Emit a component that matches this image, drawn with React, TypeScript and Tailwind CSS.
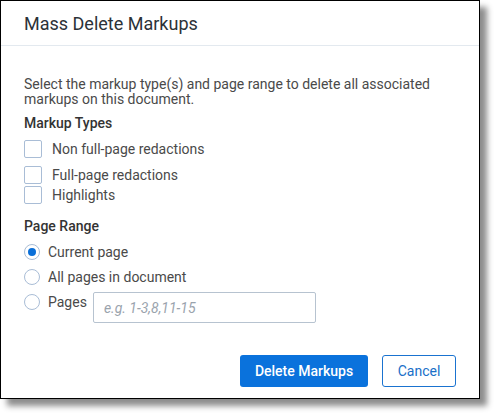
import React from "react";

function Checkbox({ label, className = "" }: { label: string; className?: string }) {
  return (
    <label className={`flex items-center gap-[10px] ${className}`}>
      <span className="block w-[18px] h-[18px] rounded-[2px] border border-[#a9bdd6] bg-white" />
      <span>{label}</span>
    </label>
  );
}

function Radio({ label, checked = false }: { label: string; checked?: boolean }) {
  return (
    <span className="flex items-center gap-[8px]">
      <span className="flex items-center justify-center w-[16px] h-[16px] rounded-full border border-[#a9bdd6] bg-white">
        {checked && <span className="block w-[8px] h-[8px] rounded-full bg-[#0a6fd8]" />}
      </span>
      <span>{label}</span>
    </span>
  );
}

export default function App() {
  return (
    <div className="w-[495px] h-[414px] bg-white" style={{ fontFamily: "Roboto, 'Liberation Sans', sans-serif" }}>
      <div className="w-[480px] h-[399px] border border-black bg-white shadow-[7px_7px_6px_rgba(0,0,0,0.45)] flex flex-col">
        <div className="h-[45px] border-b border-[#e3e9ef] px-[23px] flex items-center">
          <h1 className="text-[18px] text-[#2c3238] pt-[1px]">Mass Delete Markups</h1>
        </div>
        <div className="px-[23px] pt-[31px] text-[14px] leading-[15px] text-[#4a4a4a] flex-1">
          <p>Select the markup type(s) and page range to delete all associated markups on this document.</p>
          <div className="mt-[9px] font-medium text-[#333]">Markup Types</div>
          <Checkbox label="Non full-page redactions" className="mt-[9px]" />
          <Checkbox label="Full-page redactions" className="mt-[8px]" />
          <Checkbox label="Highlights" className="mt-[2px]" />
          <div className="mt-[15px] font-medium text-[#333]">Page Range</div>
          <div className="mt-[10px] flex flex-col gap-[9px]">
            <Radio label="Current page" checked />
            <Radio label="All pages in document" />
            <div className="flex items-start -mt-[2px]">
              <div className="pt-[2px]">
                <Radio label="Pages" />
              </div>
              <input
                placeholder="e.g. 1-3,8,11-15"
                className="ml-[6px] w-[223px] h-[31px] border border-[#b7c3d0] rounded-[2px] px-[10px] text-[14px] italic placeholder:text-[#9aa3ad] outline-none"
              />
            </div>
          </div>
        </div>
        <div className="flex justify-end gap-[14px] px-[23px] pb-[11px]">
          <button className="w-[128px] h-[32px] rounded-[3px] bg-[#0a72dc] text-white text-[14px] font-medium">Delete Markups</button>
          <button className="w-[74px] h-[32px] rounded-[3px] border border-[#1a73d0] text-[#1a6fc8] text-[14px]">Cancel</button>
        </div>
      </div>
    </div>
  );
}
